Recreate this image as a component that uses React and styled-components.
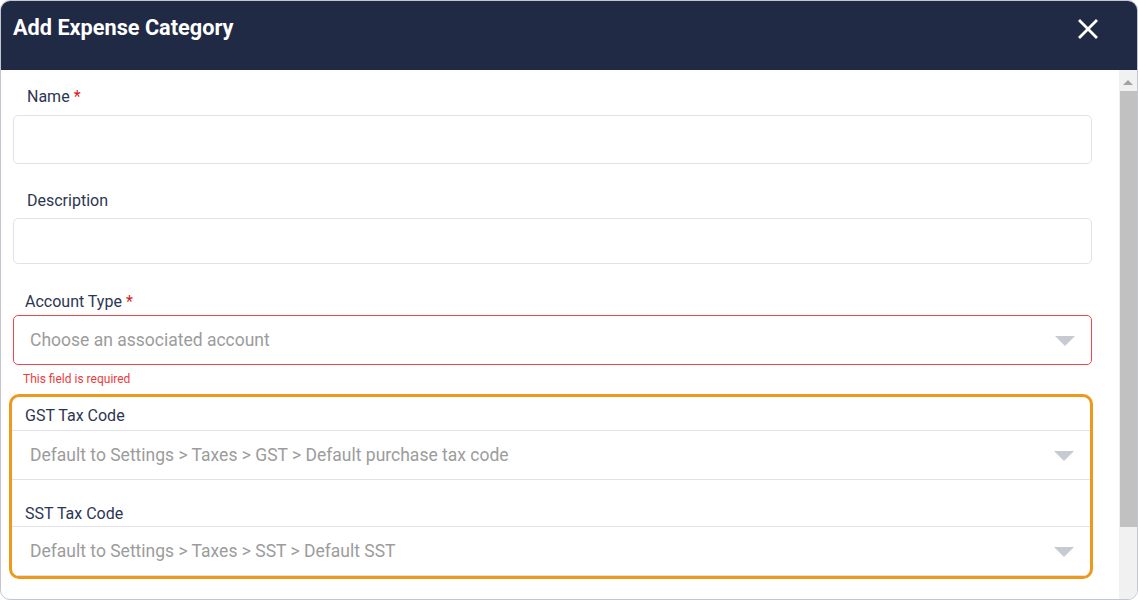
import React from 'react'
import styled, { createGlobalStyle } from 'styled-components'

const Global = createGlobalStyle`
  html, body { margin: 0; padding: 0; background: #ffffff; }
  body { font-family: Roboto, "Liberation Sans", Arial, sans-serif; }
  * { box-sizing: border-box; }
`

const Modal = styled.div`
  width: 1138px;
  height: 600px;
  border: 1px solid #c3c6d2;
  border-radius: 10px;
  overflow: hidden;
  display: flex;
  flex-direction: column;
  background: #fff;
`

const Header = styled.div`
  height: 69px;
  flex: none;
  background: #212a45;
  display: flex;
  align-items: flex-start;
  justify-content: space-between;
  padding: 13px 39px 0 12px;
`

const Title = styled.h2`
  margin: 0;
  color: #fff;
  font-size: 21.7px;
  font-weight: 700;
  line-height: 28px;
`

const Close = styled.button`
  border: 0;
  background: none;
  padding: 0;
  margin-top: 5px;
  width: 20px;
  height: 20px;
  cursor: pointer;
  display: flex;
`

const Main = styled.div`
  flex: 1;
  display: flex;
  min-height: 0;
`

const Content = styled.div`
  flex: 1;
  overflow: hidden;
  padding: 17px 27px 0 12px;
`

const Field = styled.div`
  display: flex;
  flex-direction: column;
  margin-bottom: ${p => p.$gap || 0}px;
`

const Label = styled.label`
  color: #2c3654;
  font-size: 16px;
  line-height: 20px;
  padding-left: ${p => p.$indent || 14}px;
  margin-bottom: ${p => p.$space || 8}px;
`

const Star = styled.span`
  color: #d42020;
  margin-left: 4px;
`

const Input = styled.div`
  height: ${p => p.$h || 50}px;
  border: 1px solid ${p => (p.$error ? '#ee4a4a' : '#e0e2e6')};
  border-left-width: ${p => (p.$flush ? 0 : 1)}px;
  border-right-width: ${p => (p.$flush ? 0 : 1)}px;
  border-radius: ${p => (p.$flush ? 0 : 5)}px;
  display: flex;
  align-items: center;
  justify-content: space-between;
  padding: 0 16px 0 ${p => (p.$flush ? 18 : 16)}px;
  color: #9c9c9c;
  font-size: 17.5px;
`

const Caret = styled.span`
  width: 0;
  height: 0;
  border-left: 10px solid transparent;
  border-right: 10px solid transparent;
  border-top: 10px solid #c6cad2;
  margin-top: 2px;
`

const Error = styled.div`
  color: #ec3b3b;
  font-size: 12px;
  line-height: 16px;
  padding-left: 10px;
  margin-top: 6px;
`

const Highlight = styled.div`
  margin: 7px -1px 93px -4px;
  border: 3px solid #ee981c;
  border-radius: 10px;
  padding-top: 9px;
  overflow: hidden;
`

const ScrollBar = styled.div`
  width: 18px;
  flex: none;
  background: #f1f1f1;
  display: flex;
  flex-direction: column;
  align-items: center;
`

const UpArrow = styled.div`
  height: 21px;
  flex: none;
  display: flex;
  align-items: center;
  justify-content: center;
  &::before {
    content: '';
    border-left: 5px solid transparent;
    border-right: 5px solid transparent;
    border-bottom: 5px solid #a3a3a3;
    margin-top: 4px;
  }
`

const Thumb = styled.div`
  width: 17px;
  height: 436px;
  background: #c1c1c1;
`

const Select = ({ text, error, flush }) => (
  <Input $error={error} $flush={flush}>
    <span>{text}</span>
    <Caret />
  </Input>
)

export default function App() {
  return (
    <>
      <Global />
      <Modal>
        <Header>
          <Title>Add Expense Category</Title>
          <Close aria-label="close">
            <svg width="20" height="20" viewBox="0 0 20 20">
              <path d="M2 2L18 18M18 2L2 18" stroke="#fff" strokeWidth="2.8" strokeLinecap="square" />
            </svg>
          </Close>
        </Header>
        <Main>
          <Content>
            <Field $gap={27}>
              <Label>Name<Star>*</Star></Label>
              <Input $h={49} />
            </Field>
            <Field $gap={28}>
              <Label $space={7}>Description</Label>
              <Input $h={46} />
            </Field>
            <Field>
              <Label $indent={12} $space={3}>Account Type<Star>*</Star></Label>
              <Select text="Choose an associated account" error />
              <Error>This field is required</Error>
            </Field>
            <Highlight>
              <Field $gap={24}>
                <Label $indent={13} $space={4}>GST Tax Code</Label>
                <Select text="Default to Settings > Taxes > GST > Default purchase tax code" flush />
              </Field>
              <Field>
                <Label $indent={13} $space={2}>SST Tax Code</Label>
                <Select text="Default to Settings > Taxes > SST > Default SST" flush />
              </Field>
            </Highlight>
          </Content>
          <ScrollBar>
            <UpArrow />
            <Thumb />
          </ScrollBar>
        </Main>
      </Modal>
    </>
  )
}
